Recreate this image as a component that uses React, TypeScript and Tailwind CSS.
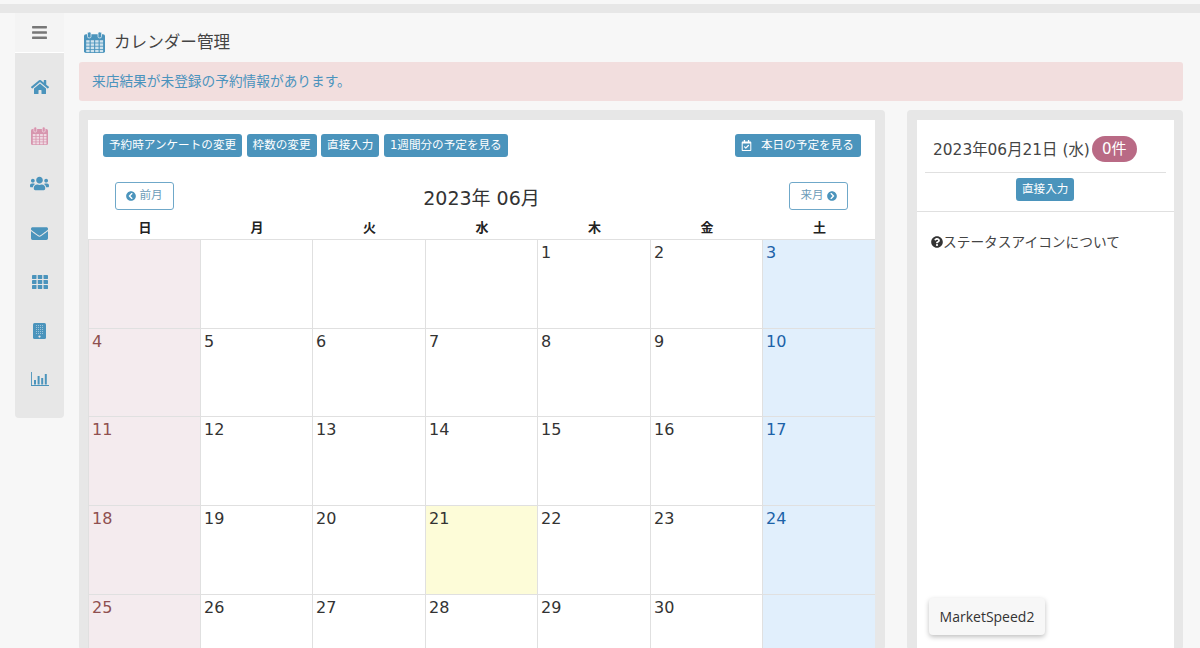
import type { ComponentType } from "react";
import {
  FaBars,
  FaChevronCircleLeft,
  FaChevronCircleRight,
  FaEnvelope,
  FaHome,
  FaQuestionCircle,
  FaRegCalendarCheck,
  FaUsers,
} from "react-icons/fa";

const WEEKDAYS = ["日", "月", "火", "水", "木", "金", "土"];
const DAYS: (number | null)[] = [
  null, null, null, null, 1, 2, 3,
  4, 5, 6, 7, 8, 9, 10,
  11, 12, 13, 14, 15, 16, 17,
  18, 19, 20, 21, 22, 23, 24,
  25, 26, 27, 28, 29, 30, null,
];
const ROW_HEIGHTS = ["h-[89px]", "h-[88px]", "h-[89px]", "h-[89px]", "h-[60px]"];

function CalendarIcon({ className, cell }: { className?: string; cell: string }) {
  const xs = [2.2, 6.7, 11.2, 15.7];
  const ys = [9, 12.5, 16, 19.5];
  return (
    <svg viewBox="0 0 21 23" preserveAspectRatio="none" className={className} fill="currentColor">
      <rect x="0" y="2.5" width="21" height="20.5" rx="2" />
      <rect x="3.5" y="0" width="3.5" height="6.5" rx="1.5" stroke={cell} strokeWidth="0.8" />
      <rect x="14" y="0" width="3.5" height="6.5" rx="1.5" stroke={cell} strokeWidth="0.8" />
      {ys.map((y) =>
        xs.map((x) => <rect key={`${x}-${y}`} x={x} y={y} width="3.4" height="2.6" fill={cell} opacity="0.85" />),
      )}
    </svg>
  );
}

function PinkCalendar({ className }: { className?: string }) {
  return <CalendarIcon className={className} cell="#f3e6ec" />;
}

function GridIcon({ className }: { className?: string }) {
  const xs = [0, 5.75, 11.5];
  const ys = [0, 5, 10];
  return (
    <svg viewBox="0 0 16 14" className={className} fill="currentColor">
      {ys.map((y) => xs.map((x) => <rect key={`${x}-${y}`} x={x} y={y} width="4.5" height="4" rx="0.4" />))}
    </svg>
  );
}

function TabletIcon({ className }: { className?: string }) {
  const xs = [3, 5, 7, 9];
  const ys = [2, 4, 6, 8, 10];
  return (
    <svg viewBox="0 0 13 16" className={className} fill="currentColor">
      <rect width="13" height="16" rx="1.5" />
      {ys.map((y) => xs.map((x) => <rect key={`${x}-${y}`} x={x} y={y} width="1" height="1" fill="#9cc4da" />))}
      <circle cx="6.5" cy="13.6" r="1.1" fill="#e7e7e7" />
    </svg>
  );
}

function ChartIcon({ className }: { className?: string }) {
  return (
    <svg viewBox="0 0 18 14" className={className} fill="currentColor">
      <rect x="0" y="0" width="0.9" height="14" />
      <rect x="0" y="13" width="18" height="1" />
      <rect x="3" y="8" width="2" height="4.5" />
      <rect x="6.6" y="4" width="2" height="8.5" />
      <rect x="10.2" y="6" width="2" height="6.5" />
      <rect x="13.8" y="2" width="2" height="10.5" />
    </svg>
  );
}

const NAV_ICONS: { Icon: ComponentType<{ className?: string }>; className: string }[] = [
  { Icon: FaHome, className: "text-[#4b94bc] text-[18px]" },
  { Icon: PinkCalendar, className: "text-[#d795ae] w-[17px] h-[18px]" },
  { Icon: FaUsers, className: "text-[#4b94bc] text-[19px] -mt-[2px]" },
  { Icon: FaEnvelope, className: "text-[#4b94bc] text-[17px]" },
  { Icon: GridIcon, className: "text-[#4b94bc] w-4 h-[14px]" },
  { Icon: TabletIcon, className: "text-[#4b94bc] w-[13px] h-4" },
  { Icon: ChartIcon, className: "text-[#4b94bc] w-[18px] h-[14px]" },
];

function ActionButton({ label, className = "" }: { label: string; className?: string }) {
  return (
    <button className={`h-[23px] px-[6px] rounded-[3px] bg-[#4b94bc] text-white text-[11.6px] leading-none whitespace-nowrap ${className}`}>
      {label}
    </button>
  );
}

function DayCell({ day, col }: { day: number | null; col: number }) {
  let bg = "bg-white";
  let color = "text-[#333]";
  if (col === 0) {
    bg = "bg-[#f4ebee]";
    color = "text-[#8f5050]";
  } else if (col === 6) {
    bg = "bg-[#e1effc]";
    color = "text-[#1c62a8]";
  } else if (day === 21) {
    bg = "bg-[#fdfcd8]";
  }
  return (
    <div className={`border-l border-[#e0e0e0] pl-[3px] pt-[1px] text-base leading-6 ${bg} ${color}`}>
      {day}
    </div>
  );
}

export default function App() {
  return (
    <div className="relative h-[648px] overflow-hidden bg-[#f7f7f7] pt-1 text-[#333] font-['DejaVu_Sans','Noto_Sans_CJK_JP',sans-serif]">
      <div className="h-[9px] bg-[#e7e7e7]" />

      <div className="flex pl-[15px] pr-[17px]">
        {/* Sidebar */}
        <aside className="w-[49px] shrink-0 self-start rounded-b-[4px] bg-[#e7e7e7] pb-[14px]">
          <div className="flex h-10 items-center justify-center border-b border-[#fff] bg-[#f4f4f4]">
            <FaBars className="text-[17px] text-[#777]" />
          </div>
          <nav className="pt-[10px]">
            {NAV_ICONS.map(({ Icon, className }, i) => (
              <div key={i} className="flex h-[48.7px] items-center justify-center">
                <Icon className={className} />
              </div>
            ))}
          </nav>
        </aside>

        {/* Main */}
        <main className="ml-[15px] min-w-0 flex-1">
          <div className="flex h-[49px] items-center pl-[5px] pt-[9px]">
            <CalendarIcon className="h-[21px] w-[21px] text-[#4b94bc]" cell="#e8f1f6" />
            <h1 className="ml-[9px] pt-[2px] text-[16.6px] leading-none text-[#444]">カレンダー管理</h1>
          </div>

          <div className="flex h-[39px] items-center rounded-[3px] bg-[#f2dede] pl-[13px] text-[13.7px] text-[#4b93bd]">
            来店結果が未登録の予約情報があります。
          </div>

          <div className="mt-[9px] flex gap-[22px]">
            {/* Calendar panel */}
            <section className="h-[540px] w-[806px] rounded-[4px] bg-[#e7e7e7] pl-[9px] pr-[10px] pt-[10px]">
              <div className="h-full bg-white">
                <div className="flex gap-[4.5px] pl-[15px] pr-[14px] pt-[14px]">
                  <ActionButton label="予約時アンケートの変更" />
                  <ActionButton label="枠数の変更" />
                  <ActionButton label="直接入力" />
                  <ActionButton label="1週間分の予定を見る" />
                  <button className="ml-auto flex h-[23px] w-[126px] items-center rounded-[3px] bg-[#4b94bc] pl-[6px] text-[11.6px] leading-none text-white">
                    <FaRegCalendarCheck className="text-[11px]" />
                    <span className="ml-[9px] whitespace-nowrap">本日の予定を見る</span>
                  </button>
                </div>

                <div className="flex items-center justify-between pl-[27px] pr-[27px] pt-[25px]">
                  <button className="flex h-[28px] w-[59px] items-center justify-center gap-[3px] rounded-[3px] border border-[#6fa8c9] text-[11.6px] text-[#6c9cb8]">
                    <FaChevronCircleLeft className="text-[10px] text-[#4b94bc]" />
                    前月
                  </button>
                  <div className="pt-[4px] text-[19px] leading-none text-[#333]">2023年 06月</div>
                  <button className="flex h-[28px] w-[59px] items-center justify-center gap-[3px] rounded-[3px] border border-[#6fa8c9] text-[11.6px] text-[#6c9cb8]">
                    来月
                    <FaChevronCircleRight className="text-[10px] text-[#4b94bc]" />
                  </button>
                </div>

                <div className="mt-[8px] grid grid-cols-[112px_112px_113px_112px_113px_112px_113px] border-b border-[#e0e0e0]">
                  {WEEKDAYS.map((w) => (
                    <div key={w} className="h-[21px] pl-[2px] text-center text-[13px] font-bold leading-[20px] text-[#222]">
                      {w}
                    </div>
                  ))}
                </div>

                {ROW_HEIGHTS.map((h, row) => (
                  <div key={row} className={`grid grid-cols-[112px_112px_113px_112px_113px_112px_113px] border-b border-[#e0e0e0] ${h}`}>
                    {DAYS.slice(row * 7, row * 7 + 7).map((day, i) => (
                      <DayCell key={i} day={day} col={i} />
                    ))}
                  </div>
                ))}
              </div>
            </section>

            {/* Day detail panel */}
            <section className="h-[540px] w-[276px] rounded-[4px] bg-[#e7e7e7] pl-[10px] pr-[9px] pt-[10px]">
              <div className="h-full bg-white">
                <div className="mx-2 flex h-[53px] items-center border-b border-[#e0e0e0] pl-2 pt-[6px]">
                  <span className="whitespace-nowrap pt-[4px] text-[15.4px] leading-none text-[#444]">2023年06月21日 (水)</span>
                  <span className="ml-[2px] flex h-[26px] w-[45px] items-center justify-center rounded-full bg-[#b96a85] text-[15px] leading-none text-white">
                    0件
                  </span>
                </div>
                <div className="flex h-[39px] justify-center border-b border-[#e0e0e0] pr-[1px] pt-[5px]">
                  <ActionButton label="直接入力" className="w-[58px]" />
                </div>
                <p className="flex items-center pl-[14px] pt-[20px] text-[13.7px] leading-5 text-[#444]">
                  <FaQuestionCircle className="text-[12px] text-[#333]" />
                  ステータスアイコンについて
                </p>
              </div>
            </section>
          </div>
        </main>
      </div>

      <div className="absolute left-[929px] top-[598px] flex h-[37px] w-[116px] items-center justify-center rounded-[4px] bg-[#f7f7f7] font-['Open_Sans',sans-serif] text-[14px] text-[#333] shadow-[0_2px_5px_rgba(0,0,0,0.25)]">
        MarketSpeed2
      </div>
    </div>
  );
}
